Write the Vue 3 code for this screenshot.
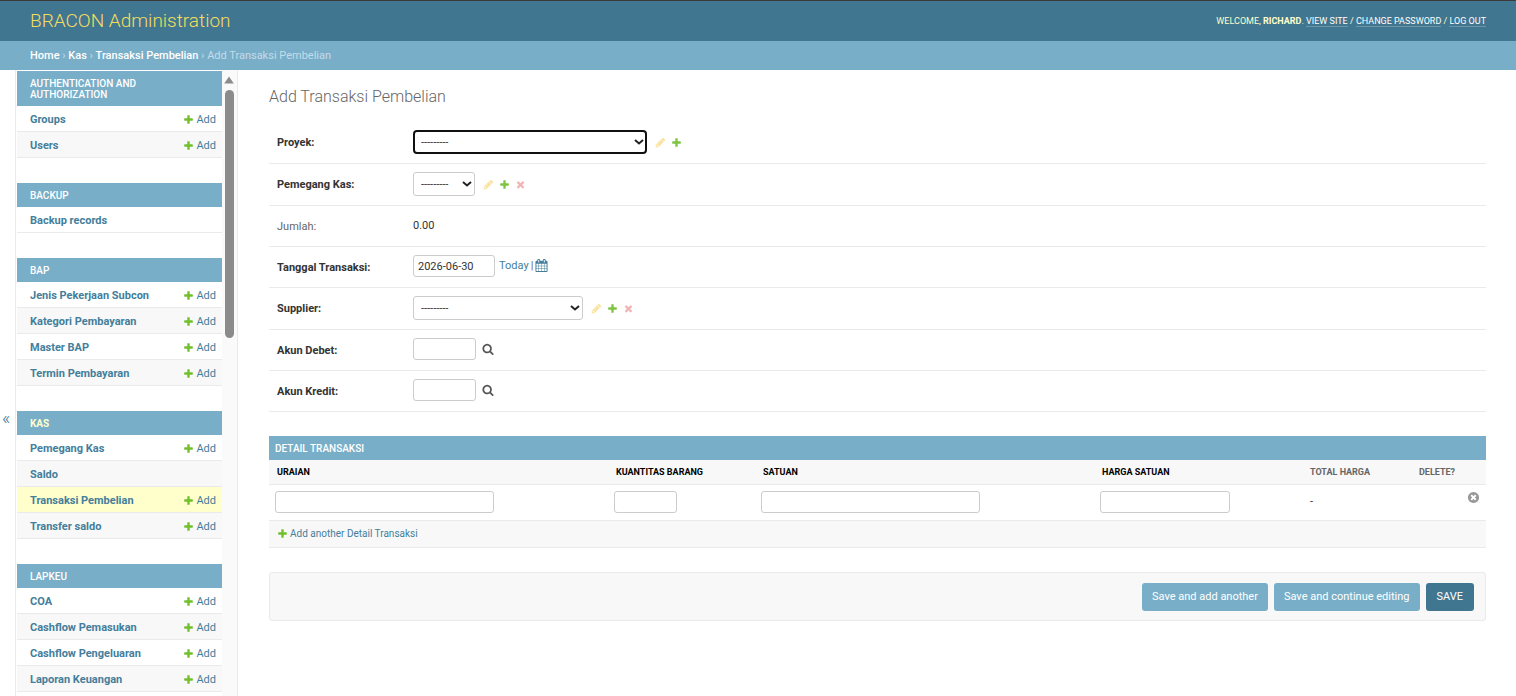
<script setup>
import { ref } from 'vue'

const paths = {
  add: 'M1600 796v192q0 40-28 68t-68 28h-416v416q0 40-28 68t-68 28h-192q-40 0-68-28t-28-68v-416h-416q-40 0-68-28t-28-68v-192q0-40 28-68t68-28h416v-416q0-40 28-68t68-28h192q40 0 68 28t28 68v416h416q40 0 68 28t28 68z',
  change: 'M491 1536l91-91-235-235-91 91v107h128v128h107zm523-928q0-22-22-22-10 0-17 7l-542 542q-7 7-7 17 0 22 22 22 10 0 17-7l542-542q7-7 7-17zm-54-192l416 416-832 832h-416v-416zm683 96q0 53-37 90l-166 166-416-416 166-165q36-38 90-38 53 0 91 38l235 234q37 39 37 91z',
  remove: 'M1490 1322q0 40-28 68l-136 136q-28 28-68 28t-68-28l-294-294-294 294q-28 28-68 28t-68-28l-136-136q-28-28-28-68t28-68l294-294-294-294q-28-28-28-68t28-68l136-136q28-28 68-28t68 28l294 294 294-294q28-28 68-28t68 28l136 136q28 28 28 68t-28 68l-294 294 294 294q28 28 28 68z',
  search: 'M1216 832q0-185-131.5-316.5t-316.5-131.5-316.5 131.5-131.5 316.5 131.5 316.5 316.5 131.5 316.5-131.5 131.5-316.5zm512 832q0 52-38 90t-90 38q-54 0-90-38l-343-342q-179 124-399 124-143 0-273.5-55.5t-225-150-150-225-55.5-273.5 55.5-273.5 150-225 225-150 273.5-55.5 273.5 55.5 225 150 150 225 55.5 273.5q0 220-124 399l343 343q37 37 37 90z',
  calendar: 'M192 1664h288v-288h-288v288zm352 0h320v-288h-320v288zm-352-352h288v-320h-288v320zm352 0h320v-320h-320v320zm-352-384h288v-288h-288v288zm736 736h320v-288h-320v288zm-384-736h320v-288h-320v288zm768 736h288v-288h-288v288zm-384-352h320v-320h-320v320zm-352-864v-288q0-13-9.5-22.5t-22.5-9.5h-64q-13 0-22.5 9.5t-9.5 22.5v288q0 13 9.5 22.5t22.5 9.5h64q13 0 22.5-9.5t9.5-22.5zm736 864h288v-320h-288v320zm-384-384h320v-288h-320v288zm384 0h288v-288h-288v288zm32-480v-288q0-13-9.5-22.5t-22.5-9.5h-64q-13 0-22.5 9.5t-9.5 22.5v288q0 13 9.5 22.5t22.5 9.5h64q13 0 22.5-9.5t9.5-22.5zm384-64v1280q0 52-38 90t-90 38h-1408q-52 0-90-38t-38-90v-1280q0-52 38-90t90-38h128v-96q0-66 47-113t113-47h64q66 0 113 47t47 113v96h384v-96q0-66 47-113t113-47h64q66 0 113 47t47 113v96h128q52 0 90 38t38 90z',
  close: 'M1277 1122q0-26-19-45l-181-181 181-181q19-19 19-45 0-27-19-46l-90-90q-19-19-46-19-26 0-45 19l-181 181-181-181q-19-19-45-19-27 0-46 19l-90 90q-19 19-19 46 0 26 19 45l181 181-181 181q-19 19-19 45 0 27 19 46l90 90q19 19 46 19 26 0 45-19l181-181 181 181q19 19 45 19 27 0 46-19l90-90q19-19 19-46zm387-226q0 209-103 385.5t-279.5 279.5-385.5 103-385.5-103-279.5-279.5-103-385.5 103-385.5 279.5-279.5 385.5-103 385.5 103 279.5 279.5 103 385.5z',
}

const apps = [
  { name: 'Authentication and Authorization', models: [{ name: 'Groups', add: true }, { name: 'Users', add: true }] },
  { name: 'Backup', models: [{ name: 'Backup records' }] },
  {
    name: 'BAP',
    models: [
      { name: 'Jenis Pekerjaan Subcon', add: true },
      { name: 'Kategori Pembayaran', add: true },
      { name: 'Master BAP', add: true },
      { name: 'Termin Pembayaran', add: true },
    ],
  },
  {
    name: 'Kas',
    current: true,
    models: [
      { name: 'Pemegang Kas', add: true },
      { name: 'Saldo' },
      { name: 'Transaksi Pembelian', add: true, current: true },
      { name: 'Transfer saldo', add: true },
    ],
  },
  {
    name: 'Lapkeu',
    models: [
      { name: 'COA', add: true },
      { name: 'Cashflow Pemasukan', add: true },
      { name: 'Cashflow Pengeluaran', add: true },
      { name: 'Laporan Keuangan', add: true },
    ],
  },
]

const fields = [
  { id: 'proyek', label: 'Proyek:', type: 'select', size: 'wide', actions: ['change', 'add'] },
  { id: 'pemegang', label: 'Pemegang Kas:', type: 'select', size: 'small', actions: ['change', 'add', 'remove'] },
  { id: 'jumlah', label: 'Jumlah:', type: 'readonly', value: '0.00' },
  { id: 'tanggal', label: 'Tanggal Transaksi:', type: 'date' },
  { id: 'supplier', label: 'Supplier:', type: 'select', size: 'medium', actions: ['change', 'add', 'remove'] },
  { id: 'debet', label: 'Akun Debet:', type: 'lookup' },
  { id: 'kredit', label: 'Akun Kredit:', type: 'lookup' },
]

const tanggal = ref('2026-06-30')
</script>

<template>
  <div class="page">
    <header class="header">
      <a class="brand" href="#">BRACON Administration</a>
      <div class="user-tools">
        Welcome, <strong>Richard</strong>. <a href="#">View site</a> / <a href="#">Change password</a> /
        <a href="#">Log out</a>
      </div>
    </header>
    <nav class="breadcrumbs" aria-label="Breadcrumbs">
      <a href="#">Home</a> › <a href="#">Kas</a> › <a href="#">Transaksi Pembelian</a> › Add Transaksi Pembelian
    </nav>

    <div class="main">
      <button class="toggle" type="button" aria-label="Toggle navigation">«</button>
      <aside class="sidebar">
        <nav class="apps" aria-label="Sidebar">
          <section v-for="app in apps" :key="app.name" class="app">
            <h2 :class="{ current: app.current }"><a href="#">{{ app.name }}</a></h2>
            <ul>
              <li v-for="m in app.models" :key="m.name" :class="{ current: m.current }">
                <a class="model" href="#">{{ m.name }}</a>
                <a v-if="m.add" class="add" href="#">
                  <svg class="icon green" viewBox="0 0 1792 1792" aria-hidden="true"><path :d="paths.add" /></svg>Add
                </a>
              </li>
            </ul>
          </section>
        </nav>
        <div class="scrollbar" aria-hidden="true">
          <svg class="arrow" viewBox="0 0 10 8"><path d="M5 .5L9.800 7.500H.2z" /></svg>
          <div class="thumb"></div>
        </div>
      </aside>

      <main class="content">
        <h1>Add Transaksi Pembelian</h1>
        <form @submit.prevent>
          <div v-for="f in fields" :key="f.id" class="row">
            <span v-if="f.type === 'readonly'" class="label plain">{{ f.label }}</span>
            <label v-else class="label" :for="f.id">{{ f.label }}</label>

            <div v-if="f.type === 'select'" class="control">
              <span class="select" :class="[f.size, { focused: f.id === 'proyek' }]">
                <select :id="f.id"><option>---------</option></select>
                <svg class="chevron" viewBox="0 0 10 10" aria-hidden="true"><path d="M1 3L5 6.500L9 3" /></svg>
              </span>
              <span class="actions">
                <a v-for="a in f.actions" :key="a" href="#" :class="a" :aria-label="a">
                  <svg class="icon" viewBox="0 0 1792 1792" aria-hidden="true"><path :d="paths[a]" /></svg>
                </a>
              </span>
            </div>
            <div v-else-if="f.type === 'readonly'" class="control value">{{ f.value }}</div>
            <div v-else-if="f.type === 'date'" class="control">
              <input :id="f.id" v-model="tanggal" class="date" type="text" />
              <span class="shortcuts">
                <a href="#">Today</a> |
                <a href="#" aria-label="Calendar">
                  <svg class="calendar" viewBox="0 0 1792 1792" aria-hidden="true"><path :d="paths.calendar" /></svg>
                </a>
              </span>
            </div>
            <div v-else class="control">
              <input :id="f.id" class="short" type="text" />
              <a class="lookup" href="#" aria-label="Lookup">
                <svg viewBox="0 0 1792 1792" aria-hidden="true"><path :d="paths.search" /></svg>
              </a>
            </div>
          </div>

          <section class="inline">
            <h2>Detail Transaksi</h2>
            <table>
              <colgroup>
                <col /><col class="c-qty" /><col /><col class="c-price" /><col class="c-total" /><col class="c-delete" />
              </colgroup>
              <thead>
                <tr>
                  <th class="required">Uraian</th>
                  <th class="required">Kuantitas Barang</th>
                  <th class="required">Satuan</th>
                  <th class="required">Harga Satuan</th>
                  <th>Total Harga</th>
                  <th>Delete?</th>
                </tr>
              </thead>
              <tbody>
                <tr>
                  <td><input class="long" type="text" aria-label="Uraian" /></td>
                  <td><input class="short" type="text" aria-label="Kuantitas Barang" /></td>
                  <td><input class="long" type="text" aria-label="Satuan" /></td>
                  <td><input class="price" type="text" aria-label="Harga Satuan" /></td>
                  <td class="total">-</td>
                  <td class="delete">
                    <a href="#" aria-label="Remove">
                      <svg viewBox="0 0 1792 1792" aria-hidden="true"><path :d="paths.close" /></svg>
                    </a>
                  </td>
                </tr>
              </tbody>
            </table>
            <div class="add-row">
              <a href="#">
                <svg class="icon green" viewBox="0 0 1792 1792" aria-hidden="true"><path :d="paths.add" /></svg>Add another Detail Transaksi
              </a>
            </div>
          </section>

          <div class="submit-row">
            <button type="submit">Save and add another</button>
            <button type="submit">Save and continue editing</button>
            <button class="default" type="submit">SAVE</button>
          </div>
        </form>
      </main>
    </div>
  </div>
</template>

<style>
body {
  background: #fff;
}
</style>

<style scoped>
.page,
.page * {
  box-sizing: border-box;
}
.page {
  display: flex;
  flex-direction: column;
  height: 100vh;
  overflow: hidden;
  font-family: Roboto, "Liberation Sans", sans-serif;
  font-size: 11px;
  line-height: 14px;
  color: #333;
}
a {
  color: #447e9b;
  text-decoration: none;
}
h1,
h2,
ul {
  margin: 0;
  padding: 0;
}
.header {
  flex: none;
  display: flex;
  align-items: center;
  justify-content: space-between;
  height: 41px;
  padding: 0 30px;
  border-top: 1px solid #3b3b3b;
  background: #417690;
  color: #ffc;
}
.brand {
  color: #f5dd5d;
  font-size: 19px;
  line-height: 24px;
  font-weight: 300;
}
.user-tools {
  font-size: 9px;
  line-height: 11px;
  text-transform: uppercase;
}
.user-tools a {
  color: #fff;
  border-bottom: 1px solid #6c95a8;
}
.breadcrumbs {
  flex: none;
  padding: 8px 30px 7px;
  background: #79aec8;
  color: #c4dce8;
}
.breadcrumbs a {
  color: #fff;
  font-weight: 500;
}
.main {
  flex: 1;
  display: flex;
  min-height: 0;
}
.toggle {
  flex: none;
  width: 16px;
  height: 100vh;
  padding: 0 3px 2px 0;
  border: 0;
  border-right: 1px solid #eaeaea;
  background: #fff;
  color: #417690;
  font-family: inherit;
  font-size: 18px;
  font-weight: 300;
}
.sidebar {
  flex: none;
  display: flex;
  width: 222px;
  padding-left: 1px;
  border-right: 1px solid #eaeaea;
  overflow: hidden;
}
.apps {
  flex: 1;
  padding-top: 1px;
}
.app {
  margin-bottom: 25px;
}
.app h2,
.inline h2 {
  padding: 7px 13px 6px;
  background: #79aec8;
  color: #fff;
  font-size: 10px;
  line-height: 11px;
  font-weight: 500;
  text-transform: uppercase;
}
.app h2 a {
  color: inherit;
}
.app h2.current {
  color: #ffc;
  font-weight: 700;
}
.app ul {
  list-style: none;
}
.app li {
  display: flex;
  justify-content: space-between;
  align-items: center;
  height: 26px;
  padding: 2px 6px 0 13px;
  border-bottom: 1px solid #eaeaea;
}
.app li:nth-child(even) {
  background: #f8f8f8;
}
.app li.current {
  background: #ffc;
}
.model {
  font-weight: 700;
}
.add,
.actions a,
.add-row a {
  display: flex;
  align-items: center;
}
.icon {
  display: block;
  width: 11px;
  height: 11px;
  fill: currentColor;
}
.green {
  margin-right: 2px;
  color: #70bf2b;
}
.scrollbar {
  display: flex;
  flex-direction: column;
  align-items: center;
  width: 15px;
  padding: 6px 1px 0 0;
  background: #fafafa;
}
.arrow {
  width: 10px;
  height: 8px;
  fill: #8b8b8b;
}
.thumb {
  width: 9px;
  height: 40%;
  margin-top: 6px;
  border-radius: 5px;
  background: #8b8b8b;
}
.content {
  flex: 1;
  min-width: 0;
  padding: 17px 30px 0 31px;
}
h1 {
  margin-bottom: 15px;
  color: #666;
  font-size: 16px;
  line-height: 20px;
  font-weight: 300;
}
.row {
  display: flex;
  min-height: 41px;
  padding: 8px 8px 9px;
  border-bottom: 1px solid #eaeaea;
}
.label {
  width: 136px;
  padding-top: 6px;
  font-weight: 700;
}
.label.plain {
  color: #666;
  font-weight: 400;
}
.control {
  display: flex;
  align-items: flex-start;
}
.value {
  padding-top: 5px;
}
input,
select {
  margin: 0;
  border: 1px solid #ccc;
  border-radius: 3px;
  background: #fff;
  color: #333;
  font-family: inherit;
  font-size: 11px;
}
input {
  display: block;
  height: 22px;
  padding: 0 4px;
}
.select {
  position: relative;
  display: block;
}
select {
  display: block;
  width: 100%;
  height: 24px;
  padding: 0 7px;
  appearance: none;
  outline: none;
}
.focused select {
  padding: 0 6px;
  border: 2px solid #101010;
  border-radius: 4px;
}
.chevron {
  position: absolute;
  top: 7px;
  right: 3px;
  width: 10px;
  height: 10px;
  fill: none;
  stroke: #222;
  stroke-width: 2;
  pointer-events: none;
}
.wide {
  width: 234px;
}
.medium {
  width: 170px;
}
.small {
  width: 62px;
}
.short {
  width: 63px;
}
.date {
  width: 82px;
}
.long {
  width: 219px;
}
.price {
  width: 130px;
}
.actions {
  display: flex;
  gap: 5px;
  padding: 7px 0 0 8px;
}
.change {
  color: #efb80b;
  opacity: 0.4;
}
.actions .add {
  color: #70bf2b;
  opacity: 0.9;
}
.remove {
  color: #dd4646;
  opacity: 0.4;
}
.shortcuts {
  display: flex;
  gap: 2px;
  padding: 4px 0 0 4px;
  color: #666;
}
.calendar {
  display: block;
  width: 13px;
  height: 13px;
  fill: #447e9b;
}
.lookup {
  padding: 5px 0 0 6px;
}
.lookup svg {
  display: block;
  width: 12px;
  height: 12px;
  fill: #555;
}
.inline {
  margin-top: 24px;
}
.inline h2 {
  padding: 7px 6px 6px;
}
table {
  width: 100%;
  table-layout: fixed;
  border-collapse: collapse;
}
.c-qty {
  width: 147px;
}
.c-price {
  width: 208px;
}
.c-total {
  width: 109px;
}
.c-delete {
  width: 75px;
}
th {
  height: 24px;
  padding: 0 8px;
  border-bottom: 1px solid #eaeaea;
  background: #f8f8f8;
  color: #666;
  font-size: 9px;
  font-weight: 700;
  text-align: left;
  text-transform: uppercase;
}
th.required {
  color: #000;
}
td {
  height: 36px;
  padding: 6px 6px 7px;
  border-bottom: 1px solid #eaeaea;
  vertical-align: top;
}
td.total {
  padding: 10px 8px 0;
}
.delete svg {
  display: block;
  width: 13px;
  height: 13px;
  margin-left: auto;
  fill: #999;
}
.add-row {
  padding: 6px 8px;
  border-bottom: 1px solid #eaeaea;
  background: #f8f8f8;
  font-size: 10px;
}
.submit-row {
  display: flex;
  justify-content: flex-end;
  gap: 6px;
  margin-top: 24px;
  padding: 10px 11px 9px;
  border: 1px solid #eaeaea;
  border-radius: 3px;
  background: #f8f8f8;
}
.submit-row button {
  height: 28px;
  padding: 0 10px;
  border: 0;
  border-radius: 3px;
  background: #79aec8;
  color: #fff;
  font-family: inherit;
  font-size: 11px;
}
.submit-row .default {
  padding: 0 11px;
  background: #417690;
}
</style>
